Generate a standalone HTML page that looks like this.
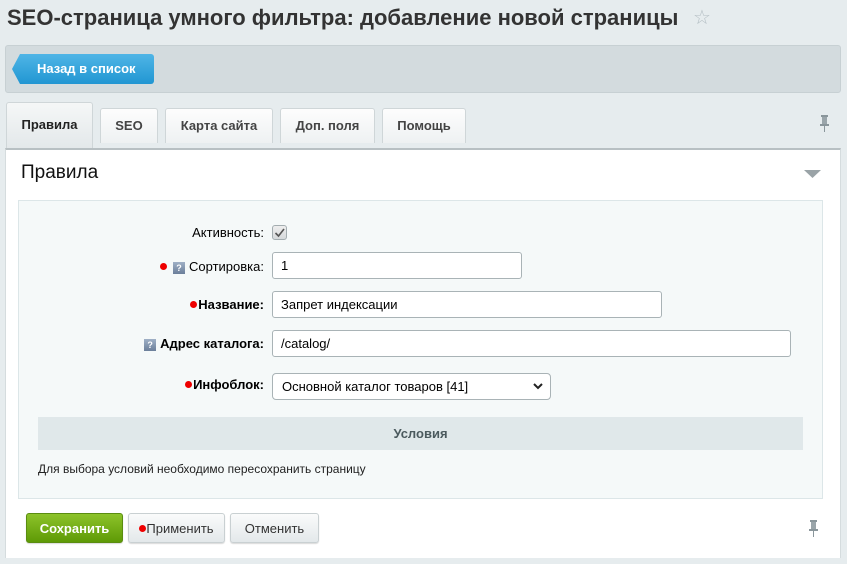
<!DOCTYPE html>
<html><head><meta charset="utf-8"><style>
*{box-sizing:border-box}
body{margin:0;width:847px;height:564px;background:#e6ecee;font-family:"Liberation Sans",Arial,sans-serif;position:relative;overflow:hidden;color:#000}
.abs{position:absolute}
h1{position:absolute;left:7px;top:5px;margin:0;font-size:22px;font-weight:bold;color:#333;white-space:nowrap}
.tb{left:5px;top:45px;width:836px;height:48px;background:#d3dbde;border:1px solid #c7d0d3;border-radius:3px}
.back{left:12px;top:54px;width:142px;height:30px;background:linear-gradient(#4fb5e6,#2196d2);border-radius:3px;color:#fff;font-weight:bold;font-size:13px;line-height:29px;padding-left:25px;clip-path:polygon(8px 0,100% 0,100% 100%,8px 100%,0 50%)}
.tab{top:108px;height:35px;background:linear-gradient(#fdfdfd,#eef1f2);border:1px solid #cfd6d8;border-bottom:none;border-radius:3px 3px 0 0;font-size:13px;font-weight:bold;color:#444;text-align:center;line-height:34px}
.tab.on{top:102px;height:46px;background:linear-gradient(#f5f7f7,#e3e8ea);color:#222;line-height:44px}
.panel{left:5px;top:148px;width:836px;height:410px;background:#fff;border-top:2px solid #b8c0c3;border-left:1px solid #d5dcde;border-right:1px solid #d5dcde}
.form{left:18px;top:200px;width:805px;height:299px;background:#f5f9f9;border:1px solid #dce6e8}
.lbl{font-size:13px;color:#000;text-align:right;right:583px;white-space:nowrap}
.in{background:#fff;border:1px solid #a9b3b6;border-radius:3px;height:27px;font-size:13px;line-height:25px;padding-left:8px}
.dot{display:inline-block;width:7px;height:7px;background:#e00;border-radius:50%;vertical-align:1px;margin-right:1px}
.q{display:inline-block;width:12px;height:12px;background:linear-gradient(#9fb0c6,#6b7f9a);color:#fff;font-size:9px;line-height:12px;text-align:center;vertical-align:0;margin-right:4px;font-weight:bold}
.btn{top:513px;height:30px;border-radius:3px;font-size:13px;text-align:center;line-height:29px;background:linear-gradient(#fafbfb,#e3e8ea);border:1px solid #c9d0d2;color:#333;box-shadow:0 1px 1px rgba(0,0,0,.15)}
</style></head><body>
<h1>SEO-страница умного фильтра: добавление новой страницы</h1>
<div class="abs" style="left:693px;top:5px;font-size:20px;color:#b5bfc4">☆</div>
<div class="abs tb"></div>
<div class="abs back">Назад в список</div>
<div class="abs tab on" style="left:6px;width:87px">Правила</div>
<div class="abs tab" style="left:100px;width:58px">SEO</div>
<div class="abs tab" style="left:165px;width:108px">Карта сайта</div>
<div class="abs tab" style="left:280px;width:95px">Доп. поля</div>
<div class="abs tab" style="left:382px;width:84px">Помощь</div>
<svg class="abs" style="left:818px;top:114px" width="14" height="20"><rect x="3" y="1" width="7" height="2" fill="#8a969b"/><rect x="4" y="3" width="5" height="7" fill="#9aa5aa"/><rect x="2" y="10" width="9" height="2" fill="#8a969b"/><rect x="6" y="12" width="1" height="6" fill="#8a969b"/></svg>
<div class="abs panel"></div>
<div class="abs" style="left:21px;top:162px;font-size:19px;color:#111">Правила</div>
<svg class="abs" style="left:804px;top:170px" width="18" height="10"><path d="M0 0H17L8.5 8Z" fill="#9aa3a7"/></svg>
<div class="abs form"></div>
<div class="abs lbl" style="top:225px">Активность:</div>
<div class="abs" style="left:272px;top:225px;width:15px;height:15px;border:1px solid #a3adb0;border-radius:3px;background:linear-gradient(#eee,#d5d9db)"><svg width="13" height="13" style="display:block"><path d="M2.5 7L5.5 10L11 3" stroke="#555" stroke-width="1.6" fill="none"/></svg></div>
<div class="abs lbl" style="top:259px"><span class="dot" style="margin-right:6px"></span><span class="q">?</span>Сортировка:</div>
<div class="abs in" style="left:272px;top:252px;width:250px">1</div>
<div class="abs lbl" style="top:297px;font-weight:bold"><span class="dot"></span>Название:</div>
<div class="abs in" style="left:272px;top:291px;width:390px">Запрет индексации</div>
<div class="abs lbl" style="top:336px;font-weight:bold"><span class="q">?</span>Адрес каталога:</div>
<div class="abs in" style="left:272px;top:330px;width:519px">/catalog/</div>
<div class="abs lbl" style="top:377px;font-weight:bold"><span class="dot"></span>Инфоблок:</div>
<div class="abs in" style="left:272px;top:373px;width:279px;border-radius:4px;padding-left:9px">Основной каталог товаров [41]<svg style="position:absolute;right:7px;top:9px" width="10" height="7"><path d="M1 1L5 5L9 1" stroke="#222" stroke-width="2" fill="none"/></svg></div>
<div class="abs" style="left:38px;top:417px;width:765px;height:33px;background:#e0e8ea;text-align:center;font-size:13px;font-weight:bold;color:#4b5a5e;line-height:33px">Условия</div>
<div class="abs" style="left:38px;top:462px;font-size:12px;color:#222">Для выбора условий необходимо пересохранить страницу</div>
<div class="abs btn" style="left:26px;width:97px;background:linear-gradient(#8dc32a,#5e9a06);border-color:#5a8d10;color:#fff;font-weight:bold">Сохранить</div>
<div class="abs btn" style="left:128px;width:97px"><span class="dot" style="margin-right:0"></span>Применить</div>
<div class="abs btn" style="left:230px;width:89px">Отменить</div>
<svg class="abs" style="left:807px;top:519px" width="14" height="20"><rect x="3" y="1" width="7" height="2" fill="#8a969b"/><rect x="4" y="3" width="5" height="7" fill="#9aa5aa"/><rect x="2" y="10" width="9" height="2" fill="#8a969b"/><rect x="6" y="12" width="1" height="6" fill="#8a969b"/></svg>
</body></html>
